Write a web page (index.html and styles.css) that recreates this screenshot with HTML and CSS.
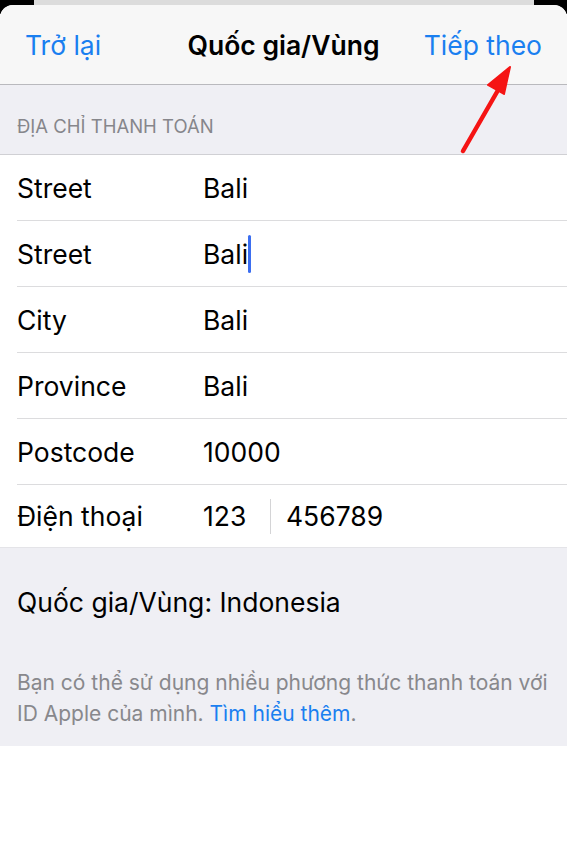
FILE: index.html
```html
<!DOCTYPE html>
<html lang="vi">
<head>
<meta charset="utf-8">
<link rel="stylesheet" href="styles.css">
</head>
<body>
<div class="topstrip"><div class="topgray"></div></div>
<div class="sheet">
  <header class="nav">
    <span class="nav-btn back">Trở lại</span>
    <span class="nav-title">Quốc gia/Vùng</span>
    <span class="nav-btn next">Tiếp theo</span>
  </header>
  <div class="section-head">ĐỊA CHỈ THANH TOÁN</div>
  <div class="list">
    <div class="row"><span class="label">Street</span><span class="value">Bali</span></div>
    <div class="row"><span class="label">Street</span><span class="value">Bali<span class="cursor"></span></span></div>
    <div class="row"><span class="label">City</span><span class="value">Bali</span></div>
    <div class="row"><span class="label">Province</span><span class="value">Bali</span></div>
    <div class="row"><span class="label">Postcode</span><span class="value">10000</span></div>
    <div class="row last"><span class="label">Điện thoại</span><span class="value phone"><span class="area">123</span><span class="vdiv"></span><span>456789</span></span></div>
  </div>
  <div class="footer">
    <div class="country">Quốc gia/Vùng: Indonesia</div>
    <p class="note"><span class="line">Bạn có thể sử dụng nhiều phương thức thanh toán với</span><span class="line">ID Apple của mình. <span class="link">Tìm hiểu thêm</span>.</span></p>
  </div>
  <svg class="arrow" width="80" height="110" viewBox="0 0 80 110">
    <line x1="17" y1="99" x2="55" y2="33" stroke="#f51414" stroke-width="4.5" stroke-linecap="round"/>
    <polygon points="64,15 42,33 58,42" fill="#f51414" stroke="#f51414" stroke-width="2" stroke-linejoin="round"/>
  </svg>
</div>
</body>
</html>
```
FILE: styles.css
```css
* { box-sizing: border-box; }
html, body { margin: 0; padding: 0; background: #fff; }
body {
  font-family: Inter, "Liberation Sans", Arial, sans-serif;
  color: #000;
  width: 567px;
  position: relative;
}
.topstrip {
  height: 14px;
  background: #000;
  display: flex;
  justify-content: center;
}
.topgray {
  width: 500px;
  height: 6px;
  background: #dcdcdc;
}
.sheet {
  margin-top: -9px;
  border-radius: 13px 13px 0 0;
  background: #f7f7f7;
  position: relative;
  overflow: hidden;
}
.nav {
  height: 80px;
  display: grid;
  grid-template-columns: 1fr auto 1fr;
  align-items: center;
  padding: 0 25px 0 25px;
  border-bottom: 1px solid #b9b9bd;
  background: #f7f7f7;
}
.nav-btn {
  color: #1a7ff0;
  font-size: 26.5px;
}
.next { justify-self: end; }
.nav-title {
  font-size: 26.5px;
  font-weight: 600;
}
.section-head {
  background: #efeff4;
  height: 70px;
  padding: 30px 0 0 17px;
  font-size: 18.5px;
  color: #86868b;
  border-bottom: 1px solid #d0d0d4;
}
.list {
  background: #fff;
  padding-left: 17px;
}
.row {
  height: 66px;
  display: flex;
  align-items: center;
  border-bottom: 1px solid #dcdcde;
  font-size: 26.5px;
}
.row.last { border-bottom: none; height: 62px; }
.label { width: 186px; }
.value { position: relative; display: flex; align-items: center; }
.cursor {
  display: inline-block;
  width: 3px;
  height: 38px;
  background: #3b6ef0;
  border-radius: 2px;
}
.phone .area { width: 67px; }
.vdiv {
  width: 1px;
  height: 35px;
  background: #d4d4d6;
  margin-right: 15px;
}
.footer {
  background: #efeff4;
  padding: 38px 17px 17px 17px;
  border-top: 1px solid #e4e4e8;
}
.country {
  font-size: 26.5px;
  margin-bottom: 49px;
}
.note {
  margin: 0;
  font-size: 21px;
  line-height: 31px;
  color: #88888c;
  display: flex;
  flex-direction: column;
}
.line { white-space: nowrap; }
.link { color: #1a7ff0; }
.arrow {
  position: absolute;
  left: 446px;
  top: 47px;
}
```
